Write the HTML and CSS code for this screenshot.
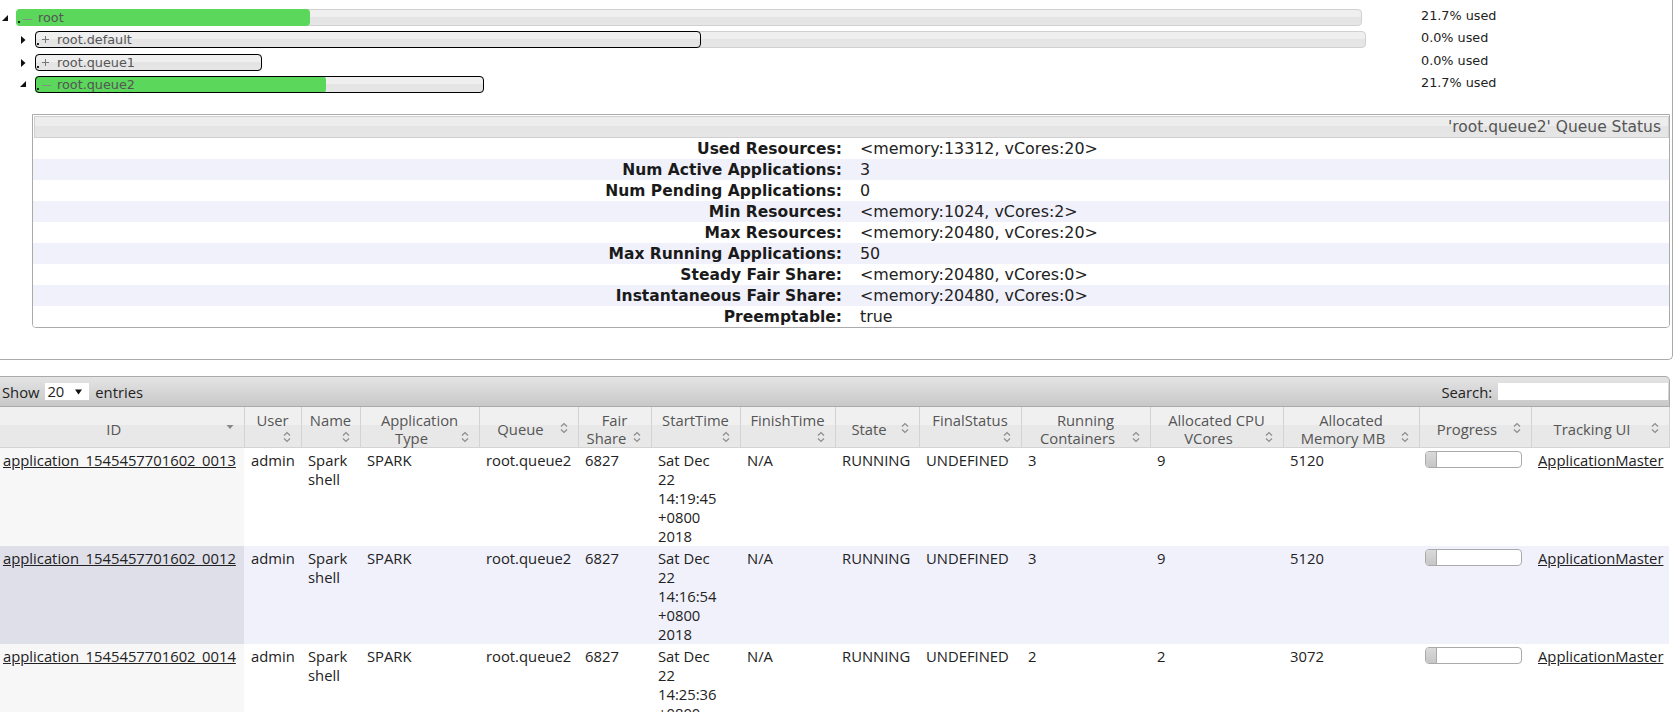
FILE: index.html
```html
<!DOCTYPE html>
<html>
<head>
<meta charset="utf-8">
<title>Fair Scheduler</title>
<link rel="stylesheet" href="styles.css">
</head>
<body>
<div class="tree-box">
  <ul class="tree">
    <li>
      <div class="qrow">
        <span class="tog tog-root"><svg width="6" height="6" viewBox="0 0 6 6"><path d="M6 0V6H0z"/></svg></span>
        <div class="track">
          <div class="bar bar-root" style="width:1346px">
            <span class="used" style="width:294px"></span>
            <span class="lbl"><i class="dot"></i><i class="minus"></i><span class="qn">root</span></span>
          </div>
        </div>
        <span class="qstats">21.7% used</span>
      </div>
      <ul class="kids">
        <li>
          <div class="qrow">
            <span class="tog tog-closed"><svg width="5" height="8" viewBox="0 0 5 8"><path d="M0 0L4.5 4 0 8z"/></svg></span>
            <div class="track">
              <div class="bar" style="width:1331px">
                <span class="fs" style="width:666px"></span>
                <span class="lbl"><i class="dot"></i><i class="plus"></i><span class="qn">root.default</span></span>
              </div>
            </div>
            <span class="qstats">0.0% used</span>
          </div>
        </li>
        <li>
          <div class="qrow">
            <span class="tog tog-closed"><svg width="5" height="8" viewBox="0 0 5 8"><path d="M0 0L4.5 4 0 8z"/></svg></span>
            <div class="track">
              <div class="bar" style="width:227px">
                <span class="fs" style="width:227px"></span>
                <span class="lbl"><i class="dot"></i><i class="plus"></i><span class="qn">root.queue1</span></span>
              </div>
            </div>
            <span class="qstats">0.0% used</span>
          </div>
        </li>
        <li>
          <div class="qrow">
            <span class="tog tog-open"><svg width="6" height="6" viewBox="0 0 6 6"><path d="M6 0V6H0z"/></svg></span>
            <div class="track">
              <div class="bar" style="width:449px">
                <span class="used" style="width:291px"></span>
                <span class="fs" style="width:449px"></span>
                <span class="lbl"><i class="dot"></i><i class="minus"></i><span class="qn">root.queue2</span></span>
              </div>
            </div>
            <span class="qstats">21.7% used</span>
          </div>
        </li>
      </ul>
    </li>
  </ul>

  <div class="info-wrap">
    <div class="info-h">'root.queue2' Queue Status</div>
    <table class="info">
      <tbody>
        <tr class="odd"><th>Used Resources:</th><td>&lt;memory:13312, vCores:20&gt;</td></tr>
        <tr class="even"><th>Num Active Applications:</th><td>3</td></tr>
        <tr class="odd"><th>Num Pending Applications:</th><td>0</td></tr>
        <tr class="even"><th>Min Resources:</th><td>&lt;memory:1024, vCores:2&gt;</td></tr>
        <tr class="odd"><th>Max Resources:</th><td>&lt;memory:20480, vCores:20&gt;</td></tr>
        <tr class="even"><th>Max Running Applications:</th><td>50</td></tr>
        <tr class="odd"><th>Steady Fair Share:</th><td>&lt;memory:20480, vCores:0&gt;</td></tr>
        <tr class="even"><th>Instantaneous Fair Share:</th><td>&lt;memory:20480, vCores:0&gt;</td></tr>
        <tr class="odd"><th>Preemptable:</th><td>true</td></tr>
      </tbody>
    </table>
  </div>
</div>

<div class="dt">
  <div class="toolbar">
    <div class="len">Show <span class="sel"><span>20</span><svg class="sel-arrow" width="7" height="6" viewBox="0 0 7 6"><path d="M0 0.5h7L3.5 5.5z"/></svg></span> entries</div>
    <div class="search">Search: <span class="inp"></span></div>
  </div>
  <table class="data">
    <colgroup>
      <col class="w-id"><col class="w-user"><col class="w-name"><col class="w-type"><col class="w-queue">
      <col class="w-fair"><col class="w-start"><col class="w-finish"><col class="w-state"><col class="w-final">
      <col class="w-run"><col class="w-cpu"><col class="w-mem"><col class="w-prog"><col class="w-track">
    </colgroup>
    <thead>
      <tr>
        <th><span class="ln"><i class="sd"><svg width="16" height="18" viewBox="0 0 16 18"><path d="M4.5 5h7L8 9z"/></svg></i>ID</span></th>
        <th><span class="ln">User</span><span class="ln"><i class="si"><svg width="16" height="18" viewBox="0 0 16 18"><path d="M5 6.5l3-3 3 3M5 9.5l3 3 3-3"/></svg></i></span></th>
        <th><span class="ln">Name</span><span class="ln"><i class="si"><svg width="16" height="18" viewBox="0 0 16 18"><path d="M5 6.5l3-3 3 3M5 9.5l3 3 3-3"/></svg></i></span></th>
        <th><span class="ln">Application</span><span class="ln"><i class="si"><svg width="16" height="18" viewBox="0 0 16 18"><path d="M5 6.5l3-3 3 3M5 9.5l3 3 3-3"/></svg></i>Type</span></th>
        <th><span class="ln"><i class="si"><svg width="16" height="18" viewBox="0 0 16 18"><path d="M5 6.5l3-3 3 3M5 9.5l3 3 3-3"/></svg></i>Queue</span></th>
        <th><span class="ln">Fair</span><span class="ln"><i class="si"><svg width="16" height="18" viewBox="0 0 16 18"><path d="M5 6.5l3-3 3 3M5 9.5l3 3 3-3"/></svg></i>Share</span></th>
        <th><span class="ln">StartTime</span><span class="ln"><i class="si"><svg width="16" height="18" viewBox="0 0 16 18"><path d="M5 6.5l3-3 3 3M5 9.5l3 3 3-3"/></svg></i></span></th>
        <th><span class="ln">FinishTime</span><span class="ln"><i class="si"><svg width="16" height="18" viewBox="0 0 16 18"><path d="M5 6.5l3-3 3 3M5 9.5l3 3 3-3"/></svg></i></span></th>
        <th><span class="ln"><i class="si"><svg width="16" height="18" viewBox="0 0 16 18"><path d="M5 6.5l3-3 3 3M5 9.5l3 3 3-3"/></svg></i>State</span></th>
        <th><span class="ln">FinalStatus</span><span class="ln"><i class="si"><svg width="16" height="18" viewBox="0 0 16 18"><path d="M5 6.5l3-3 3 3M5 9.5l3 3 3-3"/></svg></i></span></th>
        <th><span class="ln">Running</span><span class="ln"><i class="si"><svg width="16" height="18" viewBox="0 0 16 18"><path d="M5 6.5l3-3 3 3M5 9.5l3 3 3-3"/></svg></i>Containers</span></th>
        <th><span class="ln">Allocated CPU</span><span class="ln"><i class="si"><svg width="16" height="18" viewBox="0 0 16 18"><path d="M5 6.5l3-3 3 3M5 9.5l3 3 3-3"/></svg></i>VCores</span></th>
        <th><span class="ln">Allocated</span><span class="ln"><i class="si"><svg width="16" height="18" viewBox="0 0 16 18"><path d="M5 6.5l3-3 3 3M5 9.5l3 3 3-3"/></svg></i>Memory MB</span></th>
        <th><span class="ln"><i class="si"><svg width="16" height="18" viewBox="0 0 16 18"><path d="M5 6.5l3-3 3 3M5 9.5l3 3 3-3"/></svg></i>Progress</span></th>
        <th><span class="ln"><i class="si"><svg width="16" height="18" viewBox="0 0 16 18"><path d="M5 6.5l3-3 3 3M5 9.5l3 3 3-3"/></svg></i>Tracking UI</span></th>
      </tr>
    </thead>
    <tbody>
      <tr class="odd">
        <td class="s1 id"><a href="#">application_1545457701602_0013</a></td>
        <td>admin</td><td>Spark shell</td><td>SPARK</td><td class="nw">root.queue2</td><td>6827</td>
        <td class="start">Sat Dec 22 14:19:45 +0800 2018</td><td>N/A</td><td>RUNNING</td><td>UNDEFINED</td>
        <td>3</td><td>9</td><td>5120</td>
        <td class="prog"><div class="pb"><i></i></div></td>
        <td class="nw"><a href="#">ApplicationMaster</a></td>
      </tr>
      <tr class="even">
        <td class="s1 id"><a href="#">application_1545457701602_0012</a></td>
        <td>admin</td><td>Spark shell</td><td>SPARK</td><td class="nw">root.queue2</td><td>6827</td>
        <td class="start">Sat Dec 22 14:16:54 +0800 2018</td><td>N/A</td><td>RUNNING</td><td>UNDEFINED</td>
        <td>3</td><td>9</td><td>5120</td>
        <td class="prog"><div class="pb"><i></i></div></td>
        <td class="nw"><a href="#">ApplicationMaster</a></td>
      </tr>
      <tr class="odd">
        <td class="s1 id"><a href="#">application_1545457701602_0014</a></td>
        <td>admin</td><td>Spark shell</td><td>SPARK</td><td class="nw">root.queue2</td><td>6827</td>
        <td class="start">Sat Dec 22 14:25:36 +0800 2018</td><td>N/A</td><td>RUNNING</td><td>UNDEFINED</td>
        <td>2</td><td>2</td><td>3072</td>
        <td class="prog"><div class="pb"><i></i></div></td>
        <td class="nw"><a href="#">ApplicationMaster</a></td>
      </tr>
    </tbody>
  </table>
</div>
</body>
</html>
```

FILE: styles.css
```css
* { box-sizing: border-box; }
html, body {
  margin: 0;
  padding: 0;
  background: #fff;
  overflow: hidden;
}
body {
  width: 1676px;
  height: 712px;
  font-family: "DejaVu Sans", Verdana, sans-serif;
  color: #222;
}

/* ---------- queue tree ---------- */
.tree-box {
  width: 1673px;
  height: 360px;
  padding-top: 9px;
  border-right: 1px solid #aaa;
  border-bottom: 1px solid #aaa;
  border-bottom-right-radius: 5px;
}
.tree, .kids {
  list-style: none;
  margin: 0;
  padding: 0;
}
.qrow {
  display: grid;
  grid-template-columns: 16px 1405px 1fr;
  height: 22.3px;
  align-items: start;
}
.kids .qrow {
  grid-template-columns: 35px 1386px 1fr;
}
.tog { display: block; height: 17px; }
.tog svg { display: block; fill: #111; }
.tog-root svg { margin: 6px 0 0 2px; }
.tog-closed svg { margin: 5px 0 0 21px; }
.tog-open svg { margin: 5px 0 0 20px; }

.bar {
  position: relative;
  height: 17px;
  border: 1px solid #d0d0d0;
  border-radius: 4px;
  background: linear-gradient(#efefef 0, #efefef 45%, #e4e4e4 45%, #e6e6e6 100%);
}
.used {
  position: absolute;
  left: -1px;
  top: -1px;
  bottom: -1px;
  background: #5bd75b;
  border-radius: 4px;
}
.fs {
  position: absolute;
  left: -1px;
  top: -1px;
  bottom: -1px;
  border: 1px solid #000;
  border-radius: 4px;
}
.lbl {
  position: relative;
  display: flex;
  align-items: center;
  height: 15px;
  font-size: 12.8px;
  color: #555;
  white-space: nowrap;
}
.dot {
  align-self: flex-end;
  width: 2px;
  height: 2px;
  margin: 0 0 2px 1px;
  background: #222;
}
.minus {
  width: 9px;
  height: 1px;
  margin: 3px 6px 0 3px;
  background: #8a8a8a;
}
.plus {
  width: 7px;
  height: 7px;
  margin: 0 8px 0 3px;
  background:
    linear-gradient(#777, #777) center / 7px 1px no-repeat,
    linear-gradient(#777, #777) center / 1px 7px no-repeat;
}
.qn { line-height: 15px; }
.qstats {
  font-size: 12.8px;
  line-height: 14px;
  color: #222;
  white-space: nowrap;
}

/* ---------- queue status panel ---------- */
.info-wrap {
  width: 1638px;
  margin: 15.4px 0 0 32px;
  border: 1px solid #aaa;
  border-radius: 0 0 4px 4px;
  overflow: hidden;
}
.info-h {
  height: 22px;
  margin: 1px 0 0 1px;
  padding-right: 7px;
  border: 1px solid #d0d0d0;
  background: linear-gradient(#ededed 0, #ededed 45%, #e4e4e4 45%, #e6e6e6 100%);
  color: #555;
  font-size: 15.5px;
  line-height: 21px;
  text-align: right;
}
.info {
  width: 100%;
  border-collapse: collapse;
  table-layout: fixed;
}
.info th, .info td {
  height: 21px;
  padding: 1px 0 0 0;
  line-height: 20px;
  white-space: nowrap;
}
.info th {
  width: 818px;
  padding-right: 9px;
  text-align: right;
  font-weight: bold;
  font-size: 15.5px;
  color: #1a1a1a;
}
.info td {
  padding-left: 9px;
  font-size: 15.9px;
  color: #222;
}
.info tr.even { background: #f1f1fc; }
.info tr.odd { background: #fff; }

/* ---------- applications table ---------- */
.dt {
  width: 1670px;
  margin-top: 16px;
  font-family: "Open Sans", "Noto Sans", sans-serif;
  font-size: 14.8px;
  color: #222;
}
.toolbar {
  height: 31px;
  display: flex;
  align-items: center;
  justify-content: space-between;
  padding: 0 1px 0 2px;
  border-top: 1px solid #aaa;
  border-right: 1px solid #aaa;
  border-bottom: 1px solid #aaa;
  border-top-right-radius: 5px;
  background: linear-gradient(#e4e4e4, #c8c8c8);
  color: #222;
}
.len, .search {
  display: flex;
  align-items: center;
  white-space: pre;
}
.sel {
  display: inline-flex;
  align-items: center;
  width: 44px;
  height: 17px;
  margin: 0 2px 0 2px;
  padding-left: 2px;
  background: #fff;
  line-height: 17px;
}
.sel-arrow {
  margin-left: 11px;
  fill: #111;
}
.inp {
  display: inline-block;
  width: 170px;
  height: 17px;
  margin-left: 2px;
  background: #fff;
}

.data {
  width: 1669px;
  border-collapse: collapse;
  table-layout: fixed;
}
.w-id { width: 244px; }
.w-user { width: 57px; }
.w-name { width: 59px; }
.w-type { width: 119px; }
.w-queue { width: 99px; }
.w-fair { width: 73px; }
.w-start { width: 89px; }
.w-finish { width: 95px; }
.w-state { width: 84px; }
.w-final { width: 102px; }
.w-run { width: 129px; }
.w-cpu { width: 133px; }
.w-mem { width: 136px; }
.w-prog { width: 112px; }
.w-track { width: 138px; }

.data th {
  padding: 4px 6px 0 6px;
  border-right: 1px solid #d3d3d3;
  border-bottom: 1px solid #d3d3d3;
  background: linear-gradient(#f0f0f0 0, #f0f0f0 45%, #e8e8e8 45%, #e8e8e8 100%);
  color: #555;
  font-weight: normal;
  line-height: 18px;
  text-align: center;
  vertical-align: middle;
  white-space: nowrap;
}
.ln {
  display: block;
  min-height: 18px;
}
.si, .sd {
  float: right;
  width: 16px;
  height: 18px;
}
.si svg, .sd svg { display: block; }
.si svg path {
  fill: none;
  stroke: #8c8c8c;
  stroke-width: 1.2;
}
.sd svg path { fill: #888; }

.data td {
  padding: 3px 4px 0 7px;
  line-height: 19px;
  vertical-align: top;
}
.data td.id {
  padding-left: 3px;
  white-space: nowrap;
}
.data td.nw { white-space: nowrap; }
.data td.start { padding-right: 13px; }
.data td.prog { padding-left: 6px; }
.data a { color: #222; text-decoration: underline; }

.data tr.odd td { background: #fff; }
.data tr.odd td.s1 { background: #f7f7f7; }
.data tr.even td { background: #f1f1fc; }
.data tr.even td.s1 { background: #dfdfe9; }

.pb {
  width: 97px;
  height: 17px;
  border: 1px solid #aaa;
  border-radius: 4px;
  background: #fff;
  overflow: hidden;
}
.pb i {
  display: block;
  width: 11px;
  height: 100%;
  border-right: 1px solid #aaa;
  background: linear-gradient(#dadada, #c6c6c6);
}
```
